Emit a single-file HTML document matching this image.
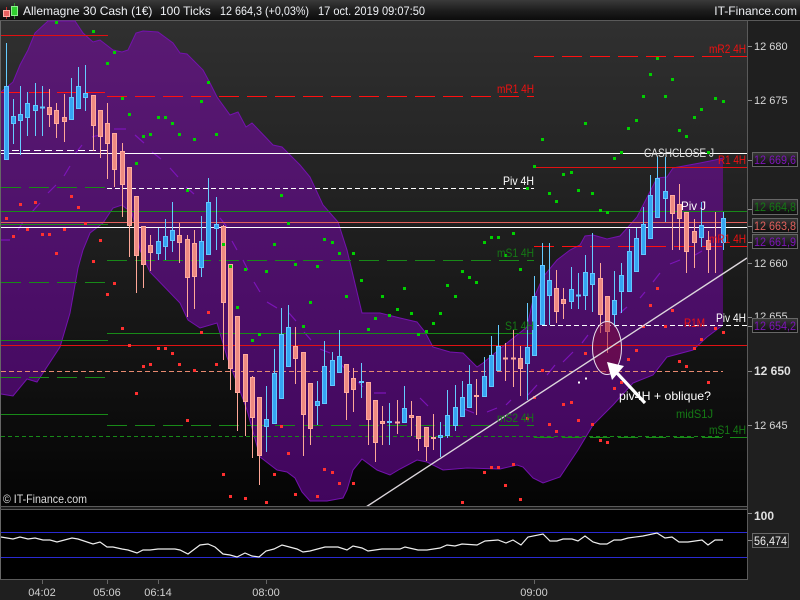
<!DOCTYPE html>
<html><head><meta charset="utf-8"><title>Allemagne 30 Cash</title>
<style>
html,body{margin:0;padding:0;background:#1e1e1e;width:800px;height:600px;overflow:hidden}
svg{display:block}
text{font-family:"Liberation Sans",sans-serif;font-size:11px}
.l text{font-size:12px}
</style></head><body>
<svg width="800" height="600" viewBox="0 0 800 600" xmlns="http://www.w3.org/2000/svg">
<defs>
<linearGradient id="bg" x1="0" y1="0" x2="0" y2="1"><stop offset="0" stop-color="#303030"/><stop offset=".5" stop-color="#1c1c1c"/><stop offset="1" stop-color="#040404"/></linearGradient>
<linearGradient id="bar" x1="0" y1="0" x2="0" y2="1"><stop offset="0" stop-color="#3a3a3a"/><stop offset=".55" stop-color="#1c1c1c"/><stop offset="1" stop-color="#0c0c0c"/></linearGradient>
<linearGradient id="env" gradientUnits="userSpaceOnUse" x1="0" y1="20" x2="0" y2="505"><stop offset="0" stop-color="#5a1a73"/><stop offset=".5" stop-color="#4d1069"/><stop offset="1" stop-color="#41055d"/></linearGradient>
<linearGradient id="box" x1="0" y1="0" x2="0" y2="1"><stop offset="0" stop-color="#383838"/><stop offset="1" stop-color="#0c0c0c"/></linearGradient>
</defs>
<rect width="800" height="600" fill="#1f1f1f"/>
<rect x="0" y="21" width="747" height="485" fill="url(#bg)"/>
<rect x="0" y="0" width="800" height="20" fill="url(#bar)"/>
<rect x="0" y="20" width="800" height="1" fill="#5a5a5a"/>
<rect x="0" y="21" width="1" height="558" fill="#666"/>

<path d="M1 92L13 82L20 65L28 50L35 33L48 21L75 21L83 33L93 42L100 40L113 50L122 52L128 50L136 33L143 31L158 32L173 43L180 53L187 54L203 70L210 83L217 97L230 115L238 112L246 127L252 123L273 145L282 147L300 165L310 177L323 205L338 222L347 250L362 313L380 313L400 318L417 322L425 332L433 347L450 352L463 353L477 367L483 363L507 343L527 327L533 300L543 277L557 260L570 250L580 245L585 236L593 235L607 239L620 236L637 217L657 178L667 177L673 168L700 163L715 160L723 158L723 325L707 337L693 350L667 357L653 375L633 383L613 405L593 425L578 450L560 477L543 483L533 478L523 467L517 465L500 469L467 468L443 470L427 462L417 460L400 469L390 475L377 470L362 459L353 470L347 490L343 498L327 501L310 501L302 492L295 478L287 472L277 470L260 457L247 410L237 383L227 357L217 323L200 328L188 320L180 303L150 272L140 250L137 233L132 213L122 205L113 208L103 223L90 233L83 250L78 268L70 313L60 347L37 382L27 379L13 396L1 394Z" fill="url(#env)"/>
<path d="M1 92L13 82L20 65L28 50L35 33L48 21L75 21L83 33L93 42L100 40L113 50L122 52L128 50L136 33L143 31L158 32L173 43L180 53L187 54L203 70L210 83L217 97L230 115L238 112L246 127L252 123L273 145L282 147L300 165L310 177L323 205L338 222L347 250L362 313L380 313L400 318L417 322L425 332L433 347L450 352L463 353L477 367L483 363L507 343L527 327L533 300L543 277L557 260L570 250L580 245L585 236L593 235L607 239L620 236L637 217L657 178L667 177L673 168L700 163L715 160L723 158M723 325L707 337L693 350L667 357L653 375L633 383L613 405L593 425L578 450L560 477L543 483L533 478L523 467L517 465L500 469L467 468L443 470L427 462L417 460L400 469L390 475L377 470L362 459L353 470L347 490L343 498L327 501L310 501L302 492L295 478L287 472L277 470L260 457L247 410L237 383L227 357L217 323L200 328L188 320L180 303L150 272L140 250L137 233L132 213L122 205L113 208L103 223L90 233L83 250L78 268L70 313L60 347L37 382L27 379L13 396L1 394" fill="none" stroke="#7412ae" stroke-width="1"/>
<path d="M1 240L10 240M18 230L23 222M32 212L40 203M48 193L56 185M64 176L70 166M75 154L82 145M92 137L103 134M114 129L126 129M135 135L144 143M152 152L161 159M170 168L178 177M186 187L194 194M220 218L227 227M232 241L237 250M243 260L248 270M254 282L260 292M267 302L277 308M289 313L296 321M304 332L311 340M320 349L330 353M339 362L347 371M358 382L363 387M374 393L386 393M420 398L428 406M462 408L474 413M487 412L497 408M506 405L511 400M528 395L537 385M547 375L555 365M563 362L573 352M582 343L588 335M620 313L627 307M640 298L645 292M653 282L660 273M670 264L680 260M695 255L702 251" stroke="#7c14b8" stroke-width="1.2" fill="none"/>

<g fill="none" stroke-width="1">
<path d="M1 35.5H108" stroke="#e01010"/>
<path d="M1 153.5H747" stroke="#fff"/>
<path d="M1 227.5H747" stroke="#fff"/>
<path d="M1 211.5H747" stroke="#188a18"/>
<path d="M1 222.5H747" stroke="#e0605c"/>
<path d="M1 224.5H108" stroke="#188a18"/>
<path d="M107 333.5H535" stroke="#188a18"/>
<path d="M1 340.5H108" stroke="#188a18"/>
<path d="M1 345.5H747" stroke="#e01212"/>
<path d="M1 414.5H108" stroke="#188a18"/>
<path d="M534 167.5H747" stroke="#e01212"/>
<path d="M1 92.5H105" stroke="#ff1010" stroke-dasharray="20 8"/>
<path d="M107 96.5H534" stroke="#ff1010" stroke-dasharray="20 8"/>
<path d="M534 56.5H747" stroke="#ff1010" stroke-dasharray="20 8"/>
<path d="M534 246.5H747" stroke="#ff1010" stroke-dasharray="20 8"/>
<path d="M1 187.5H105" stroke="#188a18" stroke-dasharray="20 8"/>
<path d="M1 282.5H105" stroke="#188a18" stroke-dasharray="20 8"/>
<path d="M1 377.5H105" stroke="#188a18" stroke-dasharray="20 8"/>
<path d="M107 260.5H534" stroke="#188a18" stroke-dasharray="20 8"/>
<path d="M107 425.5H534" stroke="#188a18" stroke-dasharray="20 8"/>
<path d="M534 437.5H747" stroke="#188a18" stroke-dasharray="20 8"/>
<path d="M1 436.5H723" stroke="#188a18" stroke-dasharray="4 3"/>
<path d="M1 371.5H723" stroke="#e88a70" stroke-dasharray="5 3"/>
<path d="M1 150.5H107" stroke="#fff" stroke-dasharray="7 4"/>
<path d="M107 188.5H534" stroke="#fff" stroke-dasharray="5 3"/>
<path d="M534 325.5H747" stroke="#fff" stroke-dasharray="5 3"/>
</g>

<g shape-rendering="crispEdges">
<path fill="none" stroke="#66ccff" stroke-width="1" d="M6.5 43V160M13.5 99V144M20.5 86V155M27.5 92V136M35.5 83V136M42.5 86V136M71.5 78V120M78.5 67V109M85.5 65V111M158.5 228V260M165.5 219V260M172.5 202V252M201.5 216V277M208.5 178V250M216.5 197V250M266.5 386V452M274.5 349V424M281.5 308V399M288.5 305V367M317.5 381V425M324.5 341V404M332.5 352V386M339.5 330V373M361.5 363V398M389.5 403V445M404.5 386V423M440.5 422V457M447.5 390V438M455.5 385V431M462.5 381V417M469.5 365V408M484.5 357V397M491.5 336V387M498.5 325V371M527.5 303V400M534.5 276V356M542.5 243V325M549.5 243V325M571.5 267V309M578.5 273V309M585.5 255V310M592.5 233V312M614.5 271V327M621.5 263V313M629.5 229V292M636.5 228V272M643.5 207V255M650.5 175V239M657.5 157V218M665.5 157V222M701.5 202V247M723.5 212V250"/>
<path fill="none" stroke="#ffa898" stroke-width="1" d="M49.5 89V127M56.5 103V138M64.5 94V142M93.5 95V151M100.5 110V158M107.5 103V179M114.5 133V187M122.5 143V217M129.5 167V257M136.5 196V293M143.5 226V288M150.5 235V271M179.5 223V263M187.5 235V317M194.5 230V309M223.5 225V360M230.5 264V390M237.5 316V431M245.5 354V436M252.5 376V458M259.5 397V485M295.5 327V384M303.5 352V456M310.5 383V445M346.5 364V420M353.5 368V412M368.5 382V445M375.5 400V462M382.5 406V445M397.5 400V434M411.5 401V436M418.5 416V451M426.5 427V461M433.5 414V450M476.5 379V415M505.5 343V381M513.5 330V387M520.5 346V396M556.5 270V323M563.5 288V319M600.5 263V333M607.5 296V353M672.5 195V250M679.5 184V250M686.5 212V273M694.5 219V268M708.5 231V273M715.5 212V273"/>
<path fill="#36a4f2" stroke="#62c8ff" stroke-width="1" d="M4.5 86.5h4v73h-4zM11.5 116.5h4v7h-4zM18.5 114.5h4v6h-4zM25.5 103.5h4v14h-4zM33.5 105.5h4v5h-4zM40.5 107h4v1h-4zM69.5 97.5h4v22h-4zM76.5 86.5h4v22h-4zM83.5 93.5h4v4h-4zM156.5 241.5h4v12h-4zM163.5 236.5h4v10h-4zM170.5 230.5h4v10h-4zM199.5 241.5h4v26h-4zM206.5 202.5h4v52h-4zM214.5 224.5h4v4h-4zM264.5 419.5h4v7h-4zM272.5 373.5h4v50h-4zM279.5 334.5h4v64h-4zM286.5 327.5h4v39h-4zM315.5 401.5h4v4h-4zM322.5 366.5h4v37h-4zM330.5 360.5h4v25h-4zM337.5 356.5h4v16h-4zM359.5 381.5h4v1h-4zM387.5 421.5h4v1h-4zM402.5 408.5h4v14h-4zM438.5 435.5h4v2h-4zM445.5 415.5h4v20h-4zM453.5 407.5h4v18h-4zM460.5 397.5h4v19h-4zM467.5 384.5h4v23h-4zM482.5 376.5h4v20h-4zM489.5 355.5h4v31h-4zM496.5 346.5h4v24h-4zM525.5 347.5h4v16h-4zM532.5 296.5h4v59h-4zM540.5 265.5h4v59h-4zM547.5 280.5h4v15h-4zM569.5 289.5h4v12h-4zM576.5 295h4v1h-4zM583.5 272.5h4v23h-4zM590.5 273.5h4v11h-4zM612.5 300.5h4v14h-4zM619.5 275.5h4v16h-4zM627.5 251.5h4v40h-4zM634.5 238.5h4v33h-4zM641.5 224.5h4v30h-4zM648.5 195.5h4v43h-4zM655.5 178.5h4v39h-4zM663.5 191.5h4v7h-4zM699.5 225.5h4v12h-4zM721.5 218.5h4v24h-4z"/>
<path fill="#ee8a82" stroke="#ffaa9e" stroke-width="1" d="M47.5 107.5h4v7h-4zM54.5 110.5h4v13h-4zM62.5 117.5h4v4h-4zM91.5 95.5h4v30h-4zM98.5 110.5h4v26h-4zM105.5 123.5h4v20h-4zM112.5 133.5h4v36h-4zM120.5 151.5h4v33h-4zM127.5 167.5h4v58h-4zM134.5 196.5h4v59h-4zM141.5 226.5h4v38h-4zM148.5 245.5h4v7h-4zM177.5 235.5h4v7h-4zM185.5 239.5h4v38h-4zM192.5 243.5h4v33h-4zM221.5 226.5h4v76h-4zM228.5 264.5h4v104h-4zM235.5 316.5h4v76h-4zM243.5 354.5h4v47h-4zM250.5 377.5h4v40h-4zM257.5 397.5h4v58h-4zM293.5 346.5h4v12h-4zM301.5 352.5h4v62h-4zM308.5 383.5h4v45h-4zM344.5 364.5h4v28h-4zM351.5 378.5h4v11h-4zM366.5 382.5h4v37h-4zM373.5 400.5h4v42h-4zM380.5 421.5h4v2h-4zM395.5 422h4v1h-4zM409.5 415.5h4v2h-4zM416.5 416.5h4v22h-4zM424.5 427.5h4v19h-4zM431.5 437.5h4v1h-4zM474.5 395.5h4v1h-4zM503.5 358h4v1h-4zM511.5 358h4v1h-4zM518.5 358.5h4v10h-4zM554.5 288.5h4v23h-4zM561.5 299.5h4v4h-4zM598.5 278.5h4v36h-4zM605.5 296.5h4v35h-4zM670.5 195.5h4v18h-4zM677.5 204.5h4v14h-4zM684.5 212.5h4v39h-4zM692.5 231.5h4v11h-4zM706.5 240.5h4v9h-4z"/>
</g>

<ellipse cx="607" cy="348" rx="14.5" ry="26.5" fill="#8a0a3a" fill-opacity=".45" stroke="#e8e0ee" stroke-width="1"/>

<g transform="translate(-1,.5)" fill="none" stroke-width="3" shape-rendering="crispEdges">
<path stroke="#00d000" d="M56 22h3M93 31h3M114 52h3M107 63h3M208 82h3M201 101h3M122 98h3M129 114h3M158 117h3M165 117h3M172 123h3M179 134h3M194 139h3M216 134h3M143 136h3M150 134h3M136 163h3M187 190h3M281 195h3M288 223h3M274 244h3M324 239h3M332 242h3M223 244h3M230 266h3M245 269h3M266 271h3M295 264h3M317 266h3M339 253h3M353 253h3M361 280h3M346 296h3M382 296h3M397 309h3M389 315h3M375 318h3M368 329h3M310 302h3M237 307h3M303 326h3M259 334h3M252 340h3M404 288h3M462 271h3M469 277h3M476 282h3M447 285h3M455 296h3M411 313h3M440 313h3M433 323h3M426 331h3M418 334h3M505 255h3M520 269h3M657 58h3M650 74h3M672 79h3M643 96h3M665 96h3M715 98h3M723 101h3M701 109h3M694 117h3M636 120h3M628 128h3M679 130h3M686 136h3M585 123h3M542 139h3M621 152h3M614 158h3M708 152h3M534 166h3M563 174h3M571 172h3M578 190h3M592 193h3M549 193h3M556 201h3M527 188h3M600 210h3M607 212h3M513 233h3M498 237h3M491 237h3M484 242h3"/>
<path stroke="#ff3030" d="M20 204h3M35 202h3M6 218h3M27 229h3M13 236h3M42 234h3M49 234h3M64 229h3M71 196h3M78 207h3M85 223h3M100 240h3M56 253h3M93 261h3M114 283h3M107 294h3M122 328h3M129 345h3M158 348h3M165 348h3M172 353h3M143 366h3M150 364h3M179 364h3M194 370h3M216 364h3M136 393h3M208 312h3M201 332h3M187 420h3M281 426h3M288 453h3M274 474h3M223 474h3M324 469h3M332 472h3M339 483h3M353 483h3M230 496h3M245 498h3M295 494h3M317 496h3M266 502h3M462 502h3M520 499h3M657 288h3M650 305h3M672 310h3M643 326h3M665 326h3M715 328h3M723 332h3M701 339h3M694 348h3M636 350h3M628 359h3M679 361h3M686 366h3M585 353h3M542 370h3M621 382h3M614 388h3M708 382h3M534 397h3M563 404h3M571 402h3M527 418h3M549 424h3M578 420h3M592 424h3M556 431h3M600 440h3M607 442h3M513 464h3M498 467h3M491 467h3M484 472h3M505 485h3"/>
<path stroke="#fff" stroke-width="2" d="M579 382h2M586 378h2"/>
</g>

<path d="M366 507L747 258" stroke="#dcd6dc" stroke-width="1.4" fill="none"/>
<path d="M645 403L616 372" stroke="#fff" stroke-width="3.2" fill="none"/>
<path d="M607 362L624 366L612 380Z" fill="#fff"/>

<g class="l" fill="#f01010">
<text x="709" y="53" textLength="37" lengthAdjust="spacingAndGlyphs">mR2 4H</text>
<text x="497" y="93" textLength="37" lengthAdjust="spacingAndGlyphs">mR1 4H</text>
<text x="718" y="164" textLength="28" lengthAdjust="spacingAndGlyphs">R1 4H</text>
<text x="709" y="243" textLength="37" lengthAdjust="spacingAndGlyphs">mR1 4H</text>
<text x="684" y="327" textLength="21" lengthAdjust="spacingAndGlyphs">R1M</text>
</g>
<g class="l" fill="#157a15">
<text x="497" y="257" textLength="37" lengthAdjust="spacingAndGlyphs">mS1 4H</text>
<text x="505" y="330" textLength="29" lengthAdjust="spacingAndGlyphs">S1 4H</text>
<text x="497" y="422" textLength="37" lengthAdjust="spacingAndGlyphs">mS2 4H</text>
<text x="676" y="418" textLength="37" lengthAdjust="spacingAndGlyphs">midS1J</text>
<text x="709" y="434" textLength="37" lengthAdjust="spacingAndGlyphs">mS1 4H</text>
</g>
<g class="l" fill="#fff">
<text x="644" y="157" textLength="70" lengthAdjust="spacingAndGlyphs" fill="#e0e0e0">CASHCLOSE J</text>
<text x="503" y="185" textLength="31" lengthAdjust="spacingAndGlyphs">Piv 4H</text>
<text x="681" y="210" textLength="25" lengthAdjust="spacingAndGlyphs">Piv J</text>
<text x="716" y="322" textLength="30" lengthAdjust="spacingAndGlyphs">Piv 4H</text>
<text x="619" y="400" textLength="92" lengthAdjust="spacingAndGlyphs">piv4H + oblique?</text>
</g>
<g class="l"><text x="3" y="503" fill="#dcdcdc" textLength="84" lengthAdjust="spacingAndGlyphs">© IT-Finance.com</text></g>

<rect x="0" y="506" width="748" height="1" fill="#5a5a5a"/>
<rect x="1" y="507" width="746" height="2" fill="#1c1c1c"/>
<rect x="1" y="510" width="746" height="69" fill="#000"/>
<rect x="0" y="509" width="748" height="1" fill="#5a5a5a"/>
<rect x="0" y="579" width="748" height="1" fill="#5a5a5a"/>
<rect x="747" y="21" width="1" height="559" fill="#5a5a5a"/>
<rect x="1" y="532" width="746" height="1" fill="#2a2ad2"/>
<rect x="1" y="557" width="746" height="1" fill="#2a2ad2"/>
<path d="M1 537L13 539L20 537L28 539L35 538L43 540L50 540L57 542L72 538L78 539L93 544L100 542L107 547L113 547L122 549L128 550L137 553L143 550L150 550L158 549L175 549L180 550L188 554L200 545L208 544L215 547L223 554L230 555L237 557L245 553L252 556L259 557L266 551L274 549L282 545L297 549L303 552L310 551L325 547L338 547L347 550L353 546L362 548L368 551L375 550L382 549L400 549L405 547L418 550L427 550L440 548L447 545L455 546L462 544L477 545L485 541L498 540L506 543L513 540L521 545L528 537L543 534L550 541L557 541L563 539L572 539L578 541L585 536L593 542L600 544L607 544L614 540L621 540L628 538L643 536L657 533L665 538L672 537L679 542L688 542L702 540L708 545L715 540L723 540" fill="none" stroke="#eee" stroke-width="1.2"/>

<path d="M42.5 580v4M107.5 580v4M158.5 580v4M266.5 580v4M534.5 580v4" stroke="#666" stroke-width="1"/>
<g fill="#d0d0d0" text-anchor="middle">
<text x="42" y="596">04:02</text>
<text x="107" y="596">05:06</text>
<text x="158" y="596">06:14</text>
<text x="266" y="596">08:00</text>
<text x="534" y="596">09:00</text>
</g>

<path d="M748 46.500h4M748 100.500h4M748 263.500h4M748 317.500h4M748 371.500h4M748 425.500h4M748 160.500h5M748 209.500h5M748 226.500h5M748 242.500h5M748 326.500h5M748 513.500h4M748 540.500h4" stroke="#888" stroke-width="1"/>
<g fill="#d8d8d8">
<text x="754" y="50">12 680</text>
<text x="754" y="104">12 675</text>
<text x="754" y="267">12 660</text>
<text x="754" y="320">12 655</text>
<text x="754" y="429">12 645</text>
</g>
<g class="l" fill="#e0e0e0" font-weight="bold">
<text x="754" y="375">12 650</text>
<text x="754" y="520">100</text>
</g>
<g stroke="#666" stroke-width="1" fill="url(#box)">
<rect x="752.500" y="152.500" width="45" height="14"/>
<rect x="752.500" y="199.500" width="45" height="15"/>
<rect x="752.500" y="218.500" width="45" height="14"/>
<rect x="752.500" y="234.500" width="45" height="14"/>
<rect x="752.500" y="318.500" width="45" height="14"/>
</g>
<rect x="752.500" y="533.500" width="36" height="14" fill="#222" stroke="#666"/>
<g class="l">
<text x="754" y="164" fill="#7d14b8" textLength="42" lengthAdjust="spacingAndGlyphs">12 669,6</text>
<text x="754" y="211" fill="#157a15" textLength="42" lengthAdjust="spacingAndGlyphs">12 664,8</text>
<text x="754" y="230" fill="#e0605c" textLength="42" lengthAdjust="spacingAndGlyphs">12 663,8</text>
<text x="754" y="246" fill="#7d14b8" textLength="42" lengthAdjust="spacingAndGlyphs">12 661,9</text>
<text x="754" y="330" fill="#7d14b8" textLength="42" lengthAdjust="spacingAndGlyphs">12 654,2</text>
<text x="754" y="545" fill="#eee" textLength="33" lengthAdjust="spacingAndGlyphs">56,474</text>
</g>

<path d="M6.500 7V19" stroke="#c03030"/><rect x="3.500" y="10.500" width="6" height="6" fill="#e86060" stroke="#ffb0a8"/>
<path d="M14.500 3V19" stroke="#2e8a2e"/><rect x="11.500" y="6.500" width="6" height="9" fill="#30d030" stroke="#90f090"/>
<g class="l" fill="#eef0f4">
<text x="23" y="15">Allemagne 30 Cash (1€)</text>
<text x="160" y="15">100 Ticks</text>
<text x="220" y="15" textLength="89" lengthAdjust="spacingAndGlyphs">12 664,3 (+0,03%)</text>
<text x="318" y="15" textLength="107" lengthAdjust="spacingAndGlyphs">17 oct. 2019 09:07:50</text>
<text x="797" y="15" text-anchor="end">IT-Finance.com</text>
</g>
</svg>
</body></html>
